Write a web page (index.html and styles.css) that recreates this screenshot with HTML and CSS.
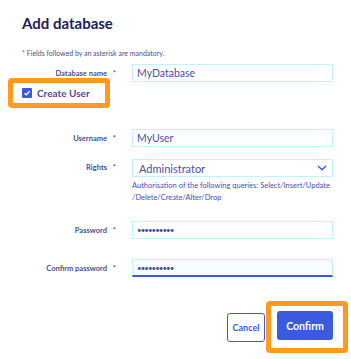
FILE: index.html
```html
<!DOCTYPE html>
<html lang="en">

<head>
    <meta charset="UTF-8">
    <meta name="viewport" content="width=device-width, initial-scale=1.0">
    <title>Add database</title>
    <link rel="stylesheet" href="styles.css">
</head>

<body>
    <div class="container">
        <h2>Add database</h2>
        <p class="note"><span class="req">*</span> Fields followed by an asterisk are mandatory.</p>

        <div class="form-group">
            <label for="dbName">Database name <span class="star">*</span></label>
            <input type="text" id="dbName" value="MyDatabase">
        </div>

        <div class="create-user">
            <span class="checkbox">
                <svg width="10" height="10" viewBox="0 0 10 10"><path d="M2.6 5.2 L4.3 6.8 L7.6 3.3" fill="none" stroke="#fff" stroke-width="1.4"/></svg>
            </span>
            Create User
        </div>

        <div class="form-group user">
            <label for="userName">Username <span class="star">*</span></label>
            <input type="text" id="userName" value="MyUser">
        </div>

        <div class="form-group rights">
            <label for="rights">Rights <span class="star">*</span></label>
            <div class="field">
                <div class="select" id="rights">
                    Administrator
                    <svg width="10" height="6" viewBox="0 0 10 6"><path d="M1 1 L5 4.8 L9 1" fill="none" stroke="#3a5ae0" stroke-width="1.5"/></svg>
                </div>
                <p class="help">Authorisation of the following queries: Select/Insert/Update<br>/Delete/Create/Alter/Drop</p>
            </div>
        </div>

        <div class="form-group pass">
            <label for="password">Password <span class="star">*</span></label>
            <input type="password" id="password" value="mypassword">
        </div>

        <div class="form-group confirm">
            <label for="confirmPassword">Confirm password <span class="star">*</span></label>
            <input type="password" id="confirmPassword" class="focused" value="mypassword">
        </div>

        <div class="actions">
            <button class="cancel">Cancel</button>
            <div class="highlight">
                <button class="primary">Confirm</button>
            </div>
        </div>
    </div>
</body>

</html>
```

FILE: styles.css
```css
body {
    font-family: Lato, "Open Sans", sans-serif;
    margin: 0;
    padding: 0;
    color: #4a4f8c;
    background: #fff;
}

.container {
    width: 351px;
    height: 359px;
    padding: 14px 18px 0 22px;
    box-sizing: border-box;
    overflow: hidden;
}

h2 {
    margin: 0;
    font-size: 15px;
    font-weight: 700;
    color: #1c2158;
    line-height: 18px;
}

.note {
    margin: 16px 0 0;
    font-size: 7px;
    line-height: 10px;
    color: #4a4f8c;
}

.req {
    color: #e0304a;
}

.form-group {
    display: flex;
    align-items: center;
}

.form-group label {
    width: 94px;
    text-align: right;
    font-size: 7.5px;
    font-weight: 700;
    color: #4a4f8c;
    margin-right: 16px;
    white-space: nowrap;
}

.star {
    margin-left: 4px;
}

.form-group:first-of-type {
    margin-top: 6px;
}

input[type="text"],
input[type="password"],
.select {
    flex: 1;
    height: 18px;
    box-sizing: border-box;
    border: 1px solid #c8f0fb;
    border-radius: 0;
    padding: 0 4px;
    font-family: Lato, sans-serif;
    font-size: 10.5px;
    color: #4a4f9a;
    background: #fff;
    outline: none;
}

input[type="password"] {
    font-size: 8px;
    letter-spacing: -1px;
}

input.focused {
    background: #f5fdff;
    border-bottom: 2px solid #3a5ae0;
}

.create-user {
    display: inline-flex;
    align-items: center;
    margin: -5px 0 0 -14px;
    width: 83px;
    height: 20px;
    border: 5px solid #ff9a1e;
    border-radius: 4px;
    padding-left: 9px;
    font-size: 10px;
    font-weight: 700;
    color: #4a4f8c;
}

.checkbox {
    width: 10px;
    height: 10px;
    background: #3a5ae0;
    border-radius: 1px;
    display: flex;
    margin-right: 5px;
}

.user {
    margin-top: 21px;
}

.rights {
    margin-top: 12px;
    align-items: flex-start;
}

.rights label {
    line-height: 18px;
}

.field {
    flex: 1;
}

.select {
    display: flex;
    align-items: center;
    justify-content: space-between;
    padding: 0 5px 0 6px;
    font-size: 11px;
}

.help {
    margin: 3px 0 0;
    font-size: 7.5px;
    line-height: 12px;
    color: #4a4fb0;
}

.pass {
    margin-top: 17px;
}

.confirm {
    margin-top: 20px;
}

.actions {
    display: flex;
    justify-content: flex-end;
    align-items: center;
    margin-top: 24px;
    margin-right: -15px;
}

button {
    font-family: Lato, sans-serif;
    font-weight: 700;
    border-radius: 3px;
    cursor: pointer;
    height: 29px;
}

.cancel {
    width: 38px;
    padding: 0;
    background: #fff;
    color: #3a5ae0;
    border: 1px solid #3a5ae0;
    font-size: 9px;
    margin-right: 1px;
}

.highlight {
    border: 5px solid #ff9a1e;
    border-radius: 4px;
    padding: 5px 10px 8px 6px;
    background: #fff;
}

.primary {
    width: 56px;
    display: block;
    padding: 0;
    background: #3a5ae0;
    color: #fff;
    border: none;
    font-size: 10.5px;
}
```
